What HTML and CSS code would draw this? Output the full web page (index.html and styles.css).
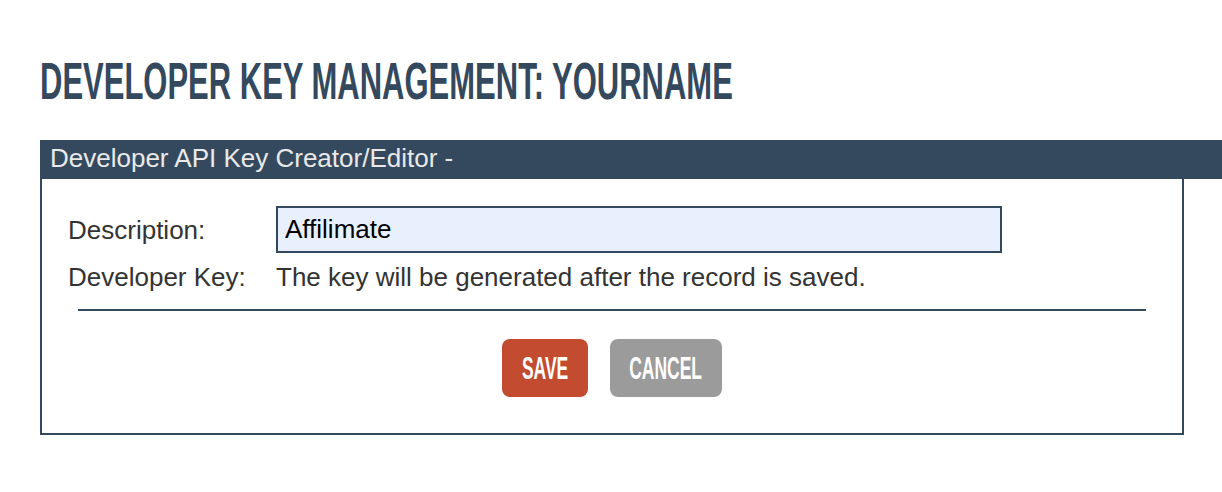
FILE: index.html
```html
<!DOCTYPE html>
<html lang="en">
<head>
    <meta charset="UTF-8">
    <meta name="viewport" content="width=device-width, initial-scale=1.0">
    <title>Developer Key Management</title>
    <link rel="stylesheet" href="styles.css">
</head>
<body>
    <h1 class="page-title"><span class="squeeze">DEVELOPER KEY MANAGEMENT: YOURNAME</span></h1>

    <div class="panel-head">Developer API Key Creator/Editor -</div>
    <div class="panel">
        <div class="form-grid">
            <label class="field-label" for="description">Description:</label>
            <input id="description" class="field-input" value="Affilimate">
            <div class="field-label">Developer Key:</div>
            <div class="field-value">The key will be generated after the record is saved.</div>
        </div>
        <div class="divider"></div>
        <div class="actions">
            <button class="btn btn-save"><span class="squeeze">SAVE</span></button>
            <button class="btn btn-cancel"><span class="squeeze">CANCEL</span></button>
        </div>
    </div>
</body>
</html>
```

FILE: styles.css
```css
:root {
    --ink: #34495e;
    --text: #333333;
    --save: #c24b30;
    --cancel: #9b9b9b;
}
body {
    margin: 0;
    padding: 0 0 0 40px;
    font-family: 'Liberation Sans', Arial, sans-serif;
    background: #fff;
}
.squeeze {
    display: inline-block;
    white-space: nowrap;
}
.page-title {
    margin: 51px 0 29px;
    font-size: 52px;
    line-height: 60px;
    font-weight: bold;
    color: var(--ink);
}
.page-title .squeeze {
    transform: scaleX(0.596);
    transform-origin: left center;
}
.panel-head {
    height: 39px;
    box-sizing: border-box;
    padding: 0 0 3px 10px;
    background: var(--ink);
    color: #e9e9e9;
    font-size: 26px;
    line-height: 36px;
}
.panel {
    margin-right: 38px;
    border: 2px solid var(--ink);
    border-top: 0;
    padding: 27px 26px 36px;
}
.form-grid {
    display: grid;
    grid-template-columns: 208px auto;
    row-gap: 9px;
    align-items: center;
    font-size: 26px;
    line-height: 30px;
    color: var(--text);
}
.field-input {
    width: 726px;
    height: 47px;
    box-sizing: border-box;
    border: 2px solid var(--ink);
    background: #e8f0fe;
    padding: 0 7px;
    font-family: inherit;
    font-size: 26px;
    color: #000;
    outline: none;
}
.divider {
    margin: 17px 10px 0;
    border-top: 2px solid var(--ink);
}
.actions {
    display: flex;
    justify-content: center;
    gap: 22px;
    margin-top: 28px;
}
.btn {
    display: flex;
    justify-content: center;
    align-items: center;
    height: 58px;
    border: none;
    border-radius: 8px;
    padding: 2px 0 0;
    color: #fff;
    font-family: inherit;
    font-size: 31px;
    font-weight: bold;
    cursor: pointer;
}
.btn .squeeze {
    flex: none;
    transform: scaleX(0.563);
}
.btn-save {
    width: 86px;
    background: var(--save);
}
.btn-cancel {
    width: 112px;
    background: var(--cancel);
}
```
